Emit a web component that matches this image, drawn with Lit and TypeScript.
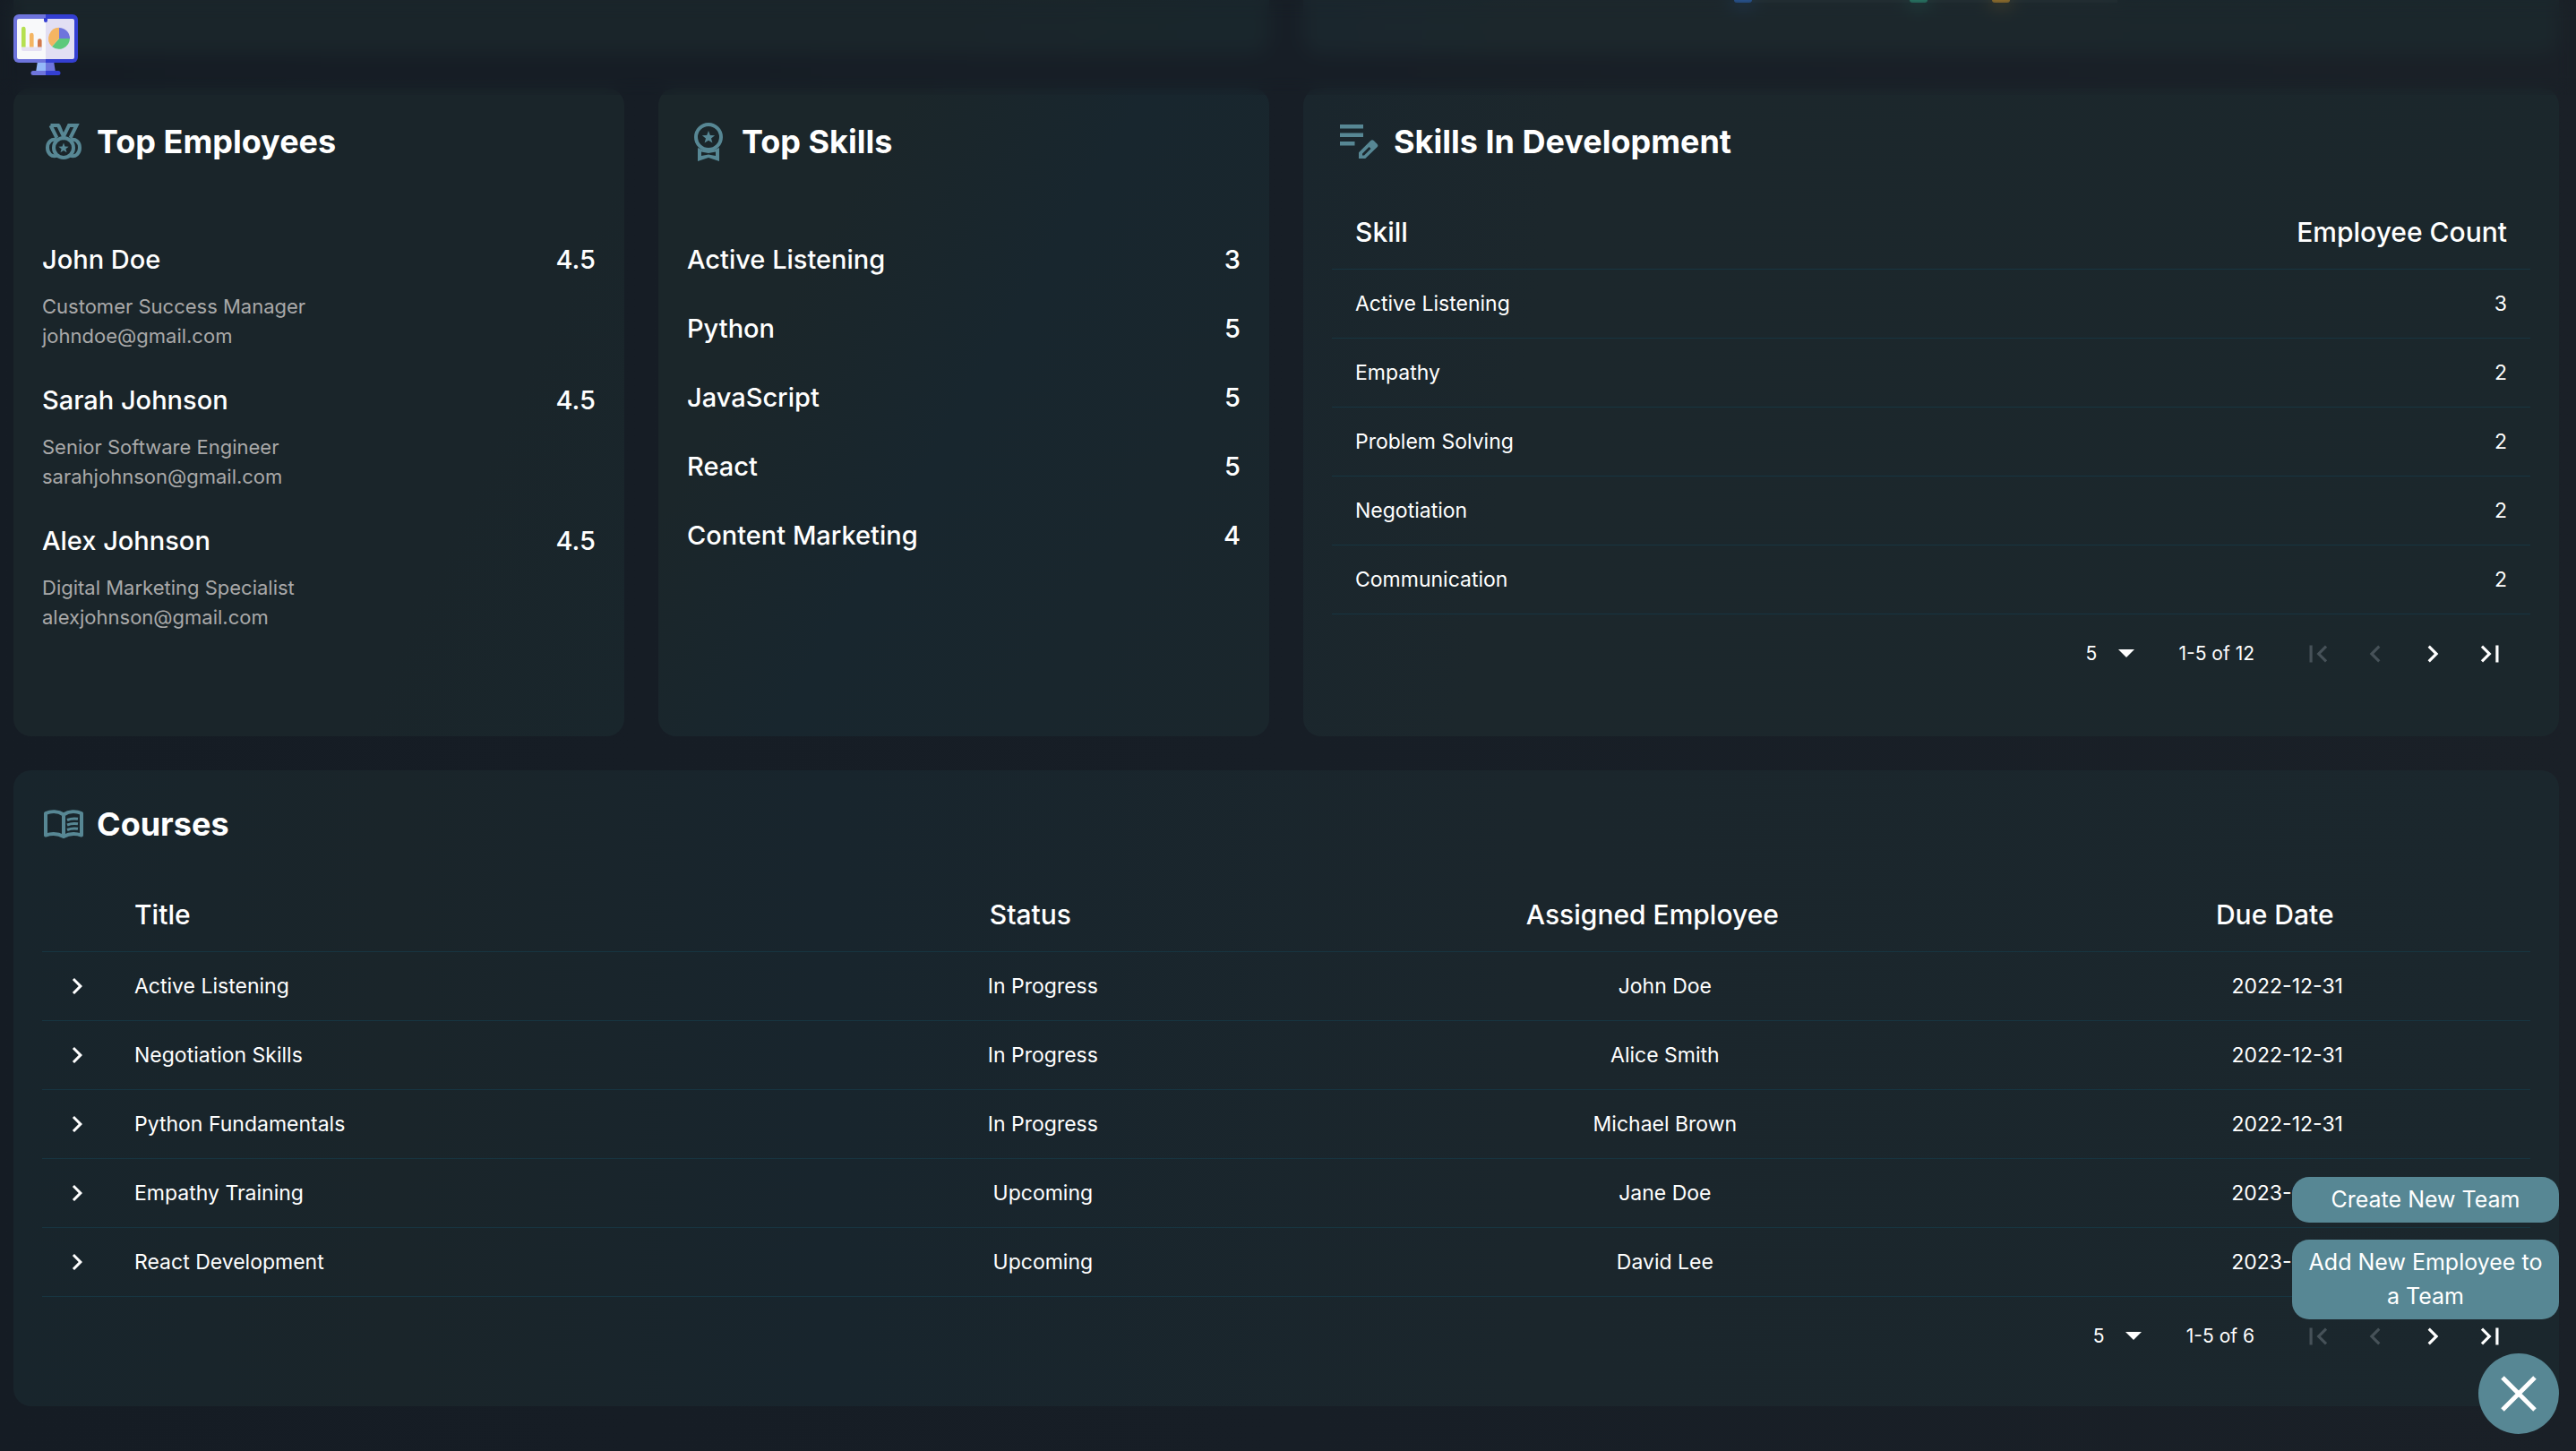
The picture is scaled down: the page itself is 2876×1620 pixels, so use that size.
import { LitElement, html, svg, css } from "lit";
import { customElement, property } from "lit/decorators.js";

const star = (cx: number, cy: number, r: number) => {
  const pts: string[] = [];
  for (let i = 0; i < 10; i++) {
    const a = -Math.PI / 2 + (i * Math.PI) / 5;
    const k = i % 2 ? r * 0.42 : r;
    pts.push(`${(cx + k * Math.cos(a)).toFixed(2)},${(cy + k * Math.sin(a)).toFixed(2)}`);
  }
  return pts.join(" ");
};

const icons: Record<string, unknown> = {
  medal: svg`
    <g fill="none" stroke="#578794" stroke-width="4">
      <path d="M17 22.5C10.5 20 6 25 6 31s4.500 11 11 8.500M31 22.500C37.500 20 42 25 42 31s-4.500 11-11 8.500"/>
      <path d="M9.500 6H18L24 18.500 30 6h8.500L31.500 20M9.500 6L16.500 20M24 18.500L27 12M21 12L18.500 6"/>
      <circle cx="24" cy="31" r="11"/>
    </g>
    <polygon points=${star(24, 31.5, 6)} fill="#578794"/>`,
  award: svg`
    <path fill="#578794" fill-rule="evenodd" d="M12 31l6 2.500h12l6-2.500V46L24 42 12 46zM16 35.500v4.500l8-1.500 8 1.500v-4.500l-8 1.500z"/>
    <circle cx="24" cy="19" r="14" fill="none" stroke="#578794" stroke-width="4"/>
    <polygon points=${star(24, 19.5, 7.5)} fill="#578794"/>`,
  edit: svg`
    <path fill="#578794" fill-rule="evenodd" d="M1 5h26v4.500H1zM1 14.500h26V19H1zM1 24h16.500v4.500H1zM22 36.300L35.300 23a2.500 2.500 0 0 1 3.500 0l3.700 3.700a2.500 2.500 0 0 1 0 3.500L29.300 43H22zM26 37.500v2h2l7.500-7.500-2-2z"/>`,
  book: svg`
    <path fill="none" stroke="#578794" stroke-width="4" stroke-linejoin="round" d="M4 12c6-2.500 14-2.500 20 1.500 6-4 14-4 20-1.500v24.500c-6-2-14-2-20 1.500-6-3.500-14-3.500-20-1.500zM24 13.500V37"/>
    <path fill="none" stroke="#578794" stroke-width="3" d="M28 19.500c4-1.600 8-1.900 12-1.200M28 25c4-1.600 8-1.900 12-1.200M28 30.500c4-1.600 8-1.900 12-1.200"/>`,
};

@customElement("section-title")
class SectionTitle extends LitElement {
  @property() icon = "medal";
  @property() text = "";
  static styles = css`
    :host { display: block; }
    .title { display: flex; align-items: center; gap: 13px; height: 56px; }
    .icon { width: 48px; height: 48px; flex: none; }
    h2 { margin: 0; font-size: 36px; line-height: 56px; font-weight: 700; white-space: nowrap; }
  `;
  render() {
    return html`<div class="title">
      <svg class="icon" viewBox="0 0 48 48" aria-hidden="true">${icons[this.icon]}</svg>
      <h2>${this.text}</h2>
    </div>`;
  }
}

@customElement("table-pager")
class TablePager extends LitElement {
  @property() range = "";
  static styles = css`
    :host { display: block; }
    .pager { display: flex; align-items: center; justify-content: flex-end; height: 88px; padding-right: 13px; font-size: 21px; }
    .size { display: grid; align-items: center; width: 54px; margin-right: 50px; }
    .size > * { grid-area: 1 / 1; }
    select { appearance: none; border: 0; padding: 0; background: transparent; color: #fff; font: inherit; width: 54px; height: 40px; outline: 0; }
    option { color: #111; }
    .caret { width: 18px; height: 9px; justify-self: end; pointer-events: none; }
    .range { margin-right: 39px; white-space: nowrap; }
    button { width: 64px; height: 64px; display: grid; place-items: center; border: 0; padding: 0; background: transparent; color: #fff; }
    button:disabled { color: #465158; }
    button svg { width: 38px; height: 38px; fill: currentColor; }
  `;
  render() {
    return html`<div class="pager">
      <div class="size">
        <select aria-label="Rows per page"><option>5</option><option>10</option><option>20</option></select>
        <svg class="caret" viewBox="0 0 18 9" aria-hidden="true"><path d="M0 0h18L9 9z" fill="#fff"/></svg>
      </div>
      <span class="range">${this.range}</span>
      <button disabled aria-label="First page"><svg viewBox="0 0 24 24"><path d="M18.410 16.590L13.820 12l4.590-4.590L17 6l-6 6 6 6zM6 6h2v12H6z"/></svg></button>
      <button disabled aria-label="Previous page"><svg viewBox="0 0 24 24"><path d="M15.410 7.410L14 6l-6 6 6 6 1.410-1.410L10.830 12z"/></svg></button>
      <button aria-label="Next page"><svg viewBox="0 0 24 24"><path d="M10 6L8.590 7.410 13.170 12l-4.580 4.590L10 18l6-6z"/></svg></button>
      <button aria-label="Last page"><svg viewBox="0 0 24 24"><path d="M5.590 7.410L10.180 12l-4.590 4.590L7 18l6-6-6-6zM16 6h2v12h-2z"/></svg></button>
    </div>`;
  }
}

const employees = [
  ["John Doe", "Customer Success Manager", "johndoe@gmail.com", "4.5"],
  ["Sarah Johnson", "Senior Software Engineer", "sarahjohnson@gmail.com", "4.5"],
  ["Alex Johnson", "Digital Marketing Specialist", "alexjohnson@gmail.com", "4.5"],
];
const topSkills = [
  ["Active Listening", "3"],
  ["Python", "5"],
  ["JavaScript", "5"],
  ["React", "5"],
  ["Content Marketing", "4"],
];
const developing = [
  ["Active Listening", "3"],
  ["Empathy", "2"],
  ["Problem Solving", "2"],
  ["Negotiation", "2"],
  ["Communication", "2"],
];
const courses = [
  ["Active Listening", "In Progress", "John Doe", "2022-12-31"],
  ["Negotiation Skills", "In Progress", "Alice Smith", "2022-12-31"],
  ["Python Fundamentals", "In Progress", "Michael Brown", "2022-12-31"],
  ["Empathy Training", "Upcoming", "Jane Doe", "2023-01-15"],
  ["React Development", "Upcoming", "David Lee", "2023-01-31"],
];

@customElement("app-root")
class AppRoot extends LitElement {
  static styles = css`
    :host {
      display: block;
      min-height: 100vh;
      color: #fff;
      font-family: Inter, "Liberation Sans", sans-serif;
      background: linear-gradient(90deg, #151c24, #171e26 50%, #1a2027);
    }
    * { box-sizing: border-box; }
    .topbar { position: fixed; inset: 0 0 auto 0; height: 106px; padding: 16px 15px; backdrop-filter: blur(10px); z-index: 2; }
    .logo { display: block; width: 72px; height: 68px; }
    .board { display: grid; grid-template-columns: repeat(4, minmax(0, 1fr)); gap: 38px; padding: 0 19px 51px 15px; }
    .card { border-radius: 20px; padding: 32px; background: #1b262b; }
    .half { grid-column: span 2; }
    .full { grid-column: span 4; padding-bottom: 34px; }
    .shade-a { background: linear-gradient(115deg, #1a252a 70%, #19262c); }
    .shade-b { background: linear-gradient(120deg, #1b262a 25%, #18262e 50%, #1a262c); }
    .shade-c { background: linear-gradient(100deg, #1a262d, #1c272c 20%, #1b272c); }
    .shade-d { background: linear-gradient(90deg, #18252c, #1a252a 15%, #18252d 32%, #1b262c 60%, #1b272d); }
    .chart { height: 60px; padding: 0; border-radius: 0 0 20px 20px; }
    .legend { display: flex; justify-content: center; height: 3px; padding-right: 12px; }
    .dot { width: 20px; border-radius: 0 0 10px 10px; }
    .bar { background: #253035; }
    .long { width: 176px; }
    .short { width: 72px; }
    .medium { width: 120px; }
    .blue { background: #2f6fd0; }
    .green { background: #2fa585; }
    .amber { background: #d99a2b; }
    .tall { min-height: 724px; }
    ul { list-style: none; margin: 84px 0 0; padding: 0; display: grid; }
    .people { gap: 35px; }
    .skills { gap: 37px; }
    .line { display: flex; justify-content: space-between; font-size: 29px; line-height: 40px; font-weight: 500; }
    .meta { margin: 16px 0 0; font-size: 22px; line-height: 33px; color: #a9a9a9; }
    .indent { padding-left: 8px; }
    table { width: 100%; margin-top: 32px; border-collapse: collapse; table-layout: fixed; }
    th { height: 82px; padding: 0 26px; font-size: 30px; font-weight: 500; text-align: left; border-bottom: 1px solid #173541; }
    td { height: 77px; padding: 0 26px; font-size: 23px; border-bottom: 1px solid #173541; }
    .num { text-align: right; }
    .courses th.mid { text-align: center; padding: 0 28px 0 0; }
    .courses td.mid { text-align: center; padding: 0; }
    .c0 { width: 77px; }
    .c1 { width: 27.7%; }
    .c2 { width: 19.5%; }
    .c3 { width: 30.5%; }
    .expand { padding: 0 0 0 21px; }
    .expand button { display: block; border: 0; padding: 0; background: transparent; color: #fff; width: 36px; height: 36px; }
    .expand svg { display: block; width: 36px; height: 36px; fill: currentColor; }
    .actions { position: fixed; right: 19px; bottom: 19px; width: 298px; display: flex; flex-direction: column; align-items: flex-end; gap: 19px; z-index: 3; }
    .action { width: 100%; border: 0; border-radius: 19px; padding: 6px 16px 7px; background: #578794; color: #fff; font: 400 25px/38px Inter, "Liberation Sans", sans-serif; text-align: center; }
    .close { width: 90px; height: 90px; margin-top: 19px; border: 0; border-radius: 50%; padding: 0; background: #578794; display: grid; place-items: center; }
    .close svg { width: 40px; height: 40px; }
  `;

  render() {
    return html`
      <header class="topbar">
        <svg class="logo" viewBox="0 0 72 68" role="img" aria-label="Dashboard">
          <path d="M27 52h9v13h-11z" fill="#94b8f9"/><path d="M36 52h9l2 13H36z" fill="#6e75dc"/>
          <path d="M36 0H6a6 6 0 0 0-6 6v42a6 6 0 0 0 6 6h30z" fill="#6e74dc"/>
          <path d="M36 0h30a6 6 0 0 1 6 6v42a6 6 0 0 1-6 6H36z" fill="#343fd2"/>
          <path d="M36 5H6a2 2 0 0 0-2 2v41a2 2 0 0 0 2 2h30z" fill="#f8f9fa"/>
          <path d="M36 5h30a2 2 0 0 1 2 2v41a2 2 0 0 1-2 2H36z" fill="#e2dff3"/>
          <path d="M34 4h4v3a2 2 0 0 1-4 0z" fill="#343fd2"/>
          <path d="M22 63h14v5H22a2.500 2.500 0 0 1 0-5z" fill="#6e74dc"/>
          <path d="M36 63h14a2.500 2.500 0 0 1 0 5H36z" fill="#343fd2"/>
          <path d="M9 36.500h23V39a2 2 0 0 1-2 2H11a2 2 0 0 1-2-2z" fill="#e6e1f3"/>
          <path d="M9 36.500V16a2.300 2.300 0 0 1 4.600 0v20.500z" fill="#b5e050"/>
          <path d="M18 36.500V23a2.300 2.300 0 0 1 4.600 0v13.500z" fill="#f4b562"/>
          <path d="M27 36.500V29.500a2.300 2.300 0 0 1 4.600 0v7z" fill="#d2794d"/>
          <path d="M51 27V15A12 12 0 0 1 63 27z" fill="#6e75dc"/>
          <path d="M51 27H63A12.300 12.300 0 0 1 43 36z" fill="#5cc97c"/>
          <path d="M51 27L43 36A12.300 12.300 0 0 1 51 14.700z" fill="#f4b562"/>
        </svg>
      </header>

      <main class="board">
        <section class="card half chart shade-a"></section>
        <section class="card half chart shade-c">
          <div class="legend" aria-hidden="true">
            <i class="dot blue"></i><i class="bar long"></i>
            <i class="dot green"></i><i class="bar short"></i>
            <i class="dot amber"></i><i class="bar medium"></i>
          </div>
        </section>

        <section class="card tall shade-a">
          <section-title icon="medal" text="Top Employees"></section-title>
          <ul class="people">
            ${employees.map(([name, role, mail, score]) => html`<li>
              <div class="line"><span>${name}</span><span>${score}</span></div>
              <p class="meta">${role}<br />${mail}</p>
            </li>`)}
          </ul>
        </section>

        <section class="card tall shade-b">
          <section-title icon="award" text="Top Skills"></section-title>
          <ul class="skills">
            ${topSkills.map(([name, n]) => html`<li class="line"><span>${name}</span><span>${n}</span></li>`)}
          </ul>
        </section>

        <section class="card tall half shade-c">
          <section-title class="indent" icon="edit" text="Skills In Development"></section-title>
          <table>
            <thead><tr><th>Skill</th><th class="num">Employee Count</th></tr></thead>
            <tbody>
              ${developing.map(([name, n]) => html`<tr><td>${name}</td><td class="num">${n}</td></tr>`)}
            </tbody>
          </table>
          <table-pager range="1-5 of 12"></table-pager>
        </section>

        <section class="card full shade-d">
          <section-title icon="book" text="Courses"></section-title>
          <table class="courses">
            <thead><tr>
              <th class="c0"></th><th class="c1">Title</th><th class="c2 mid">Status</th>
              <th class="c3 mid">Assigned Employee</th><th class="mid">Due Date</th>
            </tr></thead>
            <tbody>
              ${courses.map(([title, status, who, due]) => html`<tr>
                <td class="expand"><button aria-label="Expand ${title}"><svg viewBox="0 0 24 24"><path d="M10 6L8.590 7.410 13.170 12l-4.580 4.590L10 18l6-6z"/></svg></button></td>
                <td>${title}</td><td class="mid">${status}</td><td class="mid">${who}</td><td class="mid">${due}</td>
              </tr>`)}
            </tbody>
          </table>
          <table-pager range="1-5 of 6"></table-pager>
        </section>
      </main>

      <div class="actions">
        <button class="action">Create New Team</button>
        <button class="action">Add New Employee to a Team</button>
        <button class="close" aria-label="Close menu"><svg viewBox="0 0 40 40"><path d="M2 2l36 36M38 2L2 38" stroke="#fff" stroke-width="5" fill="none"/></svg></button>
      </div>
    `;
  }
}
